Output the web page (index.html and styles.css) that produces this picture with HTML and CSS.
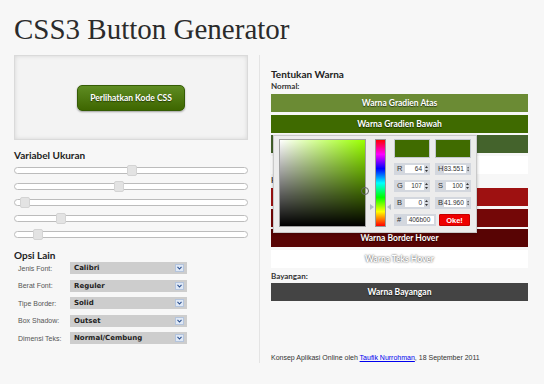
FILE: index.html
```html
<!DOCTYPE html>
<html lang="id">
<head>
  <meta charset="UTF-8">
  <title>CSS3 Button Generator</title>
  <link rel="stylesheet" href="styles.css">
</head>
<body>
  <div class="page">
    <h1 class="title">CSS3 Button Generator</h1>

    <div class="cols">
      <!-- Kolom kiri -->
      <div class="left">
        <div class="preview">
          <a class="demo-btn">Perlihatkan Kode CSS</a>
        </div>

        <h2 class="sec">Variabel Ukuran</h2>
        <div class="sliders">
          <div class="track"><span class="thumb" style="left:112px"></span></div>
          <div class="track"><span class="thumb" style="left:99px"></span></div>
          <div class="track"><span class="thumb" style="left:5px"></span></div>
          <div class="track"><span class="thumb" style="left:41px"></span></div>
          <div class="track"><span class="thumb" style="left:18px"></span></div>
        </div>

        <h2 class="sec opsi">Opsi Lain</h2>
        <div class="options">
          <div class="opt">
            <label>Jenis Font:</label>
            <div class="select"><span>Calibri</span><i class="arrow"><svg width="5" height="4" viewBox="0 0 5 4"><path d="M0.5 0.8 L2.5 3 L4.5 0.8" fill="none" stroke="#2a4f8f" stroke-width="1.1"/></svg></i></div>
          </div>
          <div class="opt">
            <label>Berat Font:</label>
            <div class="select"><span>Reguler</span><i class="arrow"><svg width="5" height="4" viewBox="0 0 5 4"><path d="M0.5 0.8 L2.5 3 L4.5 0.8" fill="none" stroke="#2a4f8f" stroke-width="1.1"/></svg></i></div>
          </div>
          <div class="opt">
            <label>Tipe Border:</label>
            <div class="select"><span>Solid</span><i class="arrow"><svg width="5" height="4" viewBox="0 0 5 4"><path d="M0.5 0.8 L2.5 3 L4.5 0.8" fill="none" stroke="#2a4f8f" stroke-width="1.1"/></svg></i></div>
          </div>
          <div class="opt">
            <label>Box Shadow:</label>
            <div class="select"><span>Outset</span><i class="arrow"><svg width="5" height="4" viewBox="0 0 5 4"><path d="M0.5 0.8 L2.5 3 L4.5 0.8" fill="none" stroke="#2a4f8f" stroke-width="1.1"/></svg></i></div>
          </div>
          <div class="opt">
            <label>Dimensi Teks:</label>
            <div class="select"><span>Normal/Cembung</span><i class="arrow"><svg width="5" height="4" viewBox="0 0 5 4"><path d="M0.5 0.8 L2.5 3 L4.5 0.8" fill="none" stroke="#2a4f8f" stroke-width="1.1"/></svg></i></div>
          </div>
        </div>
      </div>

      <!-- Kolom kanan -->
      <div class="right">
        <h2 class="sec warna">Tentukan Warna</h2>
        <p class="label">Normal:</p>

        <div class="colors">
          <div class="bar atas">Warna Gradien Atas</div>
          <div class="bar bawah">Warna Gradien Bawah</div>
          <!-- tertutup oleh color picker -->
          <div class="bar brd"></div>
          <div class="bar teks"></div>

          <p class="label hover">H</p>
          <div class="bar h-atas"></div>
          <div class="bar h-bawah"></div>
          <div class="bar h-brd">Warna Border Hover</div>
          <div class="bar teks">Warna Teks Hover</div>

          <p class="label bayang">Bayangan:</p>
          <div class="bar shadow">Warna Bayangan</div>

          <!-- Color picker popup -->
          <div class="picker">
            <div class="sv"><span class="sv-dot"></span></div>
            <div class="hue"><span class="tri tri-l"></span><span class="tri tri-r"></span></div>
            <div class="fields">
              <div class="swatch"></div>
              <div class="swatch"></div>
              <div class="field"><b>R</b><span class="val">64</span><svg class="spin" width="3" height="6" viewBox="0 0 3 6"><path d="M1.5 0 L3 2 L0 2 Z M1.5 6 L3 4 L0 4 Z" fill="#333"/></svg></div>
              <div class="field"><b>H</b><span class="val">83.551</span><svg class="spin" width="3" height="6" viewBox="0 0 3 6"><path d="M1.5 0 L3 2 L0 2 Z M1.5 6 L3 4 L0 4 Z" fill="#333"/></svg></div>
              <div class="field"><b>G</b><span class="val">107</span><svg class="spin" width="3" height="6" viewBox="0 0 3 6"><path d="M1.5 0 L3 2 L0 2 Z M1.5 6 L3 4 L0 4 Z" fill="#333"/></svg></div>
              <div class="field"><b>S</b><span class="val">100</span><svg class="spin" width="3" height="6" viewBox="0 0 3 6"><path d="M1.5 0 L3 2 L0 2 Z M1.5 6 L3 4 L0 4 Z" fill="#333"/></svg></div>
              <div class="field"><b>B</b><span class="val">0</span><svg class="spin" width="3" height="6" viewBox="0 0 3 6"><path d="M1.5 0 L3 2 L0 2 Z M1.5 6 L3 4 L0 4 Z" fill="#333"/></svg></div>
              <div class="field"><b>B</b><span class="val">41.960</span><svg class="spin" width="3" height="6" viewBox="0 0 3 6"><path d="M1.5 0 L3 2 L0 2 Z M1.5 6 L3 4 L0 4 Z" fill="#333"/></svg></div>
              <div class="hexrow">
                <div class="field hex"><b>#</b><span class="val">406b00</span></div>
                <a class="ok">Oke!</a>
              </div>
            </div>
          </div>
        </div>

        <p class="footer">Konsep Aplikasi Online oleh <a href="#">Taufik Nurrohman</a>, 18 September 2011</p>
      </div>
    </div>
  </div>
</body>
</html>
```

FILE: styles.css
```css
body {
  margin: 0;
  background-color: #f7f7f7;
  font-family: Lato, "Open Sans", sans-serif;
  color: #333;
}
.page {
  padding: 0 16px 0 14px;
}
.title {
  margin: 0 0 9px;
  padding-top: 12px;
  font: 400 29px/34px "Liberation Serif", serif;
  color: #2b2b2b;
}
.cols {
  display: grid;
  grid-template-columns: 234px 269px;
  column-gap: 11px;
}

/* preview */
.preview {
  height: 85px;
  box-sizing: border-box;
  border: 1px solid #dadada;
  background: #f3f3f3;
  box-shadow: inset 0 0 4px rgba(0,0,0,0.12);
  display: flex;
  align-items: center;
  justify-content: center;
}
.demo-btn {
  width: 108px;
  height: 26px;
  box-sizing: border-box;
  display: flex;
  align-items: center;
  justify-content: center;
  border: 1px solid #355c05;
  border-radius: 5px;
  background: linear-gradient(#5e8c22, #3e6600);
  color: #fff;
  font: 700 8.5px Lato, sans-serif;
  text-shadow: 0 1px 1px rgba(0,0,0,0.5);
  box-shadow: 0 1px 2px rgba(0,0,0,0.35);
}

.sec {
  margin: 8px 0 0;
  font: 700 10px/14px Lato, sans-serif;
  color: #222;
}
.opsi {
  margin-top: 10px;
}

/* sliders */
.sliders {
  display: flex;
  flex-direction: column;
  gap: 9px;
  margin-top: 5px;
}
.track {
  position: relative;
  height: 7px;
  box-sizing: border-box;
  border: 1px solid #bcbcbc;
  border-radius: 4px;
  background: #fff;
}
.thumb {
  position: absolute;
  top: -3px;
  width: 10px;
  height: 11px;
  box-sizing: border-box;
  background: #e3e3e3;
  border: 1px solid #d4d4d4;
  border-radius: 2px;
}

/* opsi lain */
.options {
  display: flex;
  flex-direction: column;
  gap: 5.5px;
}
.opt {
  display: flex;
  align-items: center;
  height: 12px;
  padding-left: 4px;
}
.opt label {
  width: 52px;
  font: 7px "Liberation Sans", sans-serif;
  color: #555;
}
.select {
  width: 117px;
  height: 12px;
  box-sizing: border-box;
  padding: 0 3px 0 4px;
  display: flex;
  align-items: center;
  justify-content: space-between;
  background: #cdcdcd;
  font: 700 7px "DejaVu Sans", sans-serif;
  color: #222;
}
.arrow {
  width: 9px;
  height: 8px;
  box-sizing: border-box;
  display: flex;
  align-items: center;
  justify-content: center;
  background: #dfe8f5;
  border: 1px solid #b4c4dc;
}

/* kolom kanan */
.right {
  border-left: 1px solid #e4e4e4;
  padding-left: 11px;
  box-sizing: border-box;
}
.warna {
  margin-top: 12px;
}
.label {
  margin: 0;
  font: 700 8px/10px Lato, sans-serif;
  color: #333;
}
.colors {
  position: relative;
  margin-top: 3px;
}
.bar {
  height: 18px;
  margin-top: 2.5px;
  display: flex;
  align-items: center;
  justify-content: center;
  color: #fff;
  font: 700 8.5px Lato, sans-serif;
  text-shadow: 0 1px 1px rgba(0,0,0,0.6);
}
.bar:first-child {
  margin-top: 0;
}
.atas { background: #6b8b34; }
.bawah { background: #3f6a00; }
.brd { background: #44632c; }
.teks {
  background: #fff;
  text-shadow: 0 0 2px #222;
}
.h-atas { background: #9e1111; }
.h-bawah { background: #740707; }
.h-brd { background: #580404; }
.shadow { background: #444; }
.hover {
  margin-top: 1.5px;
}
.hover + .bar {
  margin-top: 3px;
}
.bayang {
  margin-top: 3.5px;
}
.bayang + .bar {
  margin-top: 2px;
}

.footer {
  margin: 52px 0 0;
  font: 7px/10px "Liberation Sans", sans-serif;
  color: #333;
}
.footer a {
  color: #0000ee;
}

/* color picker */
.picker {
  position: absolute;
  left: 2px;
  top: 41px;
  width: 204px;
  height: 98px;
  box-sizing: border-box;
  padding: 3px 5px 5px;
  display: flex;
  align-items: flex-start;
  background: #ececec;
  border: 1px solid #c9c9c9;
  box-shadow: 0 1px 3px rgba(0,0,0,0.25);
}
.sv {
  position: relative;
  width: 88px;
  height: 88px;
  box-sizing: border-box;
  border: 1px solid #a0a0a0;
  background:
    linear-gradient(to top, #000, rgba(0,0,0,0)),
    linear-gradient(to right, #fff, hsl(84, 100%, 50%));
}
.sv-dot {
  position: absolute;
  right: -4px;
  top: 47px;
  width: 6px;
  height: 6px;
  border: 1px solid #666;
  border-radius: 50%;
}
.hue {
  position: relative;
  width: 11px;
  height: 88px;
  margin-left: 9px;
  box-sizing: border-box;
  border: 1px solid #9a9a9a;
  background: linear-gradient(#f00, #f0f, #00f, #0ff, #0f0, #ff0, #f00);
}
.tri {
  position: absolute;
  top: 64px;
  width: 0;
  height: 0;
  border-top: 3.5px solid transparent;
  border-bottom: 3.5px solid transparent;
}
.tri-l {
  left: -6px;
  border-left: 4px solid #b3bcc6;
}
.tri-r {
  right: -6px;
  border-right: 4px solid #b3bcc6;
}
.fields {
  margin-left: 8px;
  display: grid;
  grid-template-columns: 36px 36px;
  grid-template-rows: 19px repeat(4, 12px);
  gap: 5px;
}
.swatch {
  background: #406b00;
  border: 1px solid #c3c7cf;
  box-sizing: border-box;
}
.field {
  display: flex;
  align-items: center;
  box-sizing: border-box;
  padding: 0 2px 0 3px;
  background: #d3d7de;
  font: 6.5px/8px "Liberation Sans", sans-serif;
  color: #333;
}
.field b {
  width: 8px;
  font-weight: 400;
  font-size: 7.5px;
}
.val {
  flex: 1;
  height: 8px;
  padding-right: 2px;
  background: #fff;
  text-align: right;
}
.spin {
  margin-left: 1px;
}
.hexrow {
  grid-column: 1 / 3;
  display: flex;
  gap: 3px;
}
.hex {
  width: 42px;
}
.hex .val {
  text-align: center;
  margin-left: 2px;
}
.ok {
  width: 31px;
  box-sizing: border-box;
  display: flex;
  align-items: center;
  justify-content: center;
  background: #ee0000;
  border: 1px solid #c40000;
  border-radius: 1px;
  color: #fff;
  font: 700 7.5px "Liberation Sans", sans-serif;
}
```
